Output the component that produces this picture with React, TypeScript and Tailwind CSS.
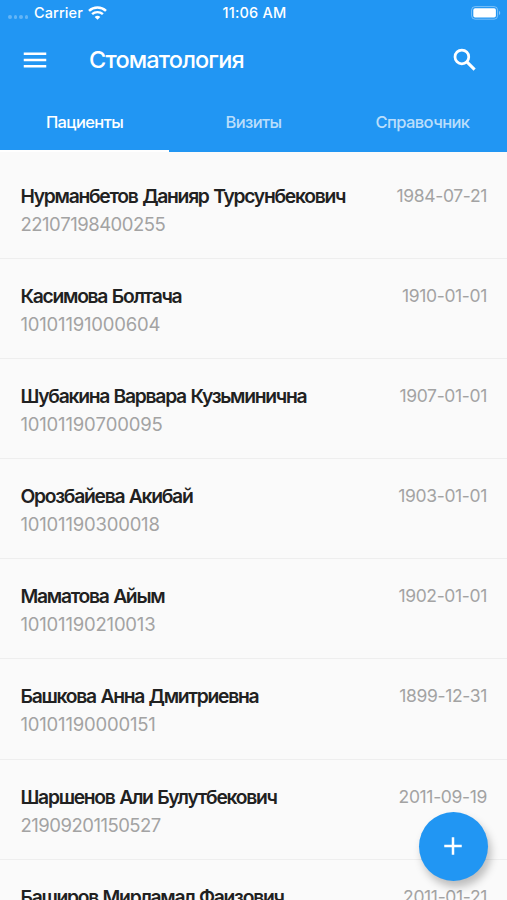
import { MdAdd, MdMenu } from 'react-icons/md'

interface Patient {
    name: string
    inn: string
    birthday: string
}

const tabs = ['Пациенты', 'Визиты', 'Справочник']

const patients: Patient[] = [
    { name: 'Нурманбетов Данияр Турсунбекович', inn: '22107198400255', birthday: '1984-07-21' },
    { name: 'Касимова Болтача', inn: '10101191000604', birthday: '1910-01-01' },
    { name: 'Шубакина Варвара Кузьминична', inn: '10101190700095', birthday: '1907-01-01' },
    { name: 'Орозбайева Акибай', inn: '10101190300018', birthday: '1903-01-01' },
    { name: 'Маматова Айым', inn: '10101190210013', birthday: '1902-01-01' },
    { name: 'Башкова Анна Дмитриевна', inn: '10101190000151', birthday: '1899-12-31' },
    { name: 'Шаршенов Али Булутбекович', inn: '21909201150527', birthday: '2011-09-19' },
    { name: 'Баширов Мирламал Фаизович', inn: '22101201100314', birthday: '2011-01-21' },
]

function StatusBar() {
    return (
        <div className="grid h-[26px] grid-cols-3 items-center pl-2 pr-[6px] text-[14.5px] font-medium leading-[26px]">
            <div className="flex items-center">
                <div className="mt-2 flex gap-[2px]">
                    {[0, 1, 2, 3].map((i) => (
                        <span key={i} className="h-[3.5px] w-[3.5px] rounded-full bg-white/30" />
                    ))}
                </div>
                <span className="ml-[6px] tracking-[0.1px]">Carrier</span>
                <svg className="ml-[5px]" width="19" height="14" viewBox="0 0 19 14" fill="none" stroke="white">
                    <path d="M1 4.9C5.8.4 13.2.4 18 4.9" strokeWidth="2.5" />
                    <path d="M4.1 8.2c3-2.8 7.8-2.8 10.8 0" strokeWidth="2.4" />
                    <path d="M9.5 13.7 6.7 10.9c1.6-1.4 4-1.4 5.6 0Z" fill="white" stroke="none" />
                </svg>
            </div>
            <span className="text-center tracking-[0.2px]">11:06 AM</span>
            <svg className="justify-self-end" width="30" height="14" viewBox="0 0 30 14" fill="none">
                <rect x=".6" y=".6" width="26" height="12.6" rx="3.5" stroke="white" strokeOpacity=".4" />
                <rect x="2.3" y="2.3" width="22.6" height="9.2" rx="1.8" fill="white" />
                <path d="M28 4.7c1.7.8 1.7 3.6 0 4.4Z" fill="white" fillOpacity=".45" />
            </svg>
        </div>
    )
}

function PatientRow({ patient }: { patient: Patient }) {
    // The digit 1 is narrow in Inter, so numbers that start with 1 are set looser
    const innTracking = patient.inn.startsWith('1') ? 'tracking-[-0.2px]' : 'tracking-[-0.5px]'

    return (
        <li className="flex h-[100.2px] shrink-0 items-start justify-between border-b border-[#eeeeee] pl-[20.5px] pr-5 pt-[23px]">
            <div>
                <p className="whitespace-nowrap text-[19.3px] font-semibold leading-7 tracking-[-1.28px] text-[#212121] [word-spacing:1px]">
                    {patient.name}
                </p>
                <p className={`text-[18.5px] leading-7 text-[#a3a3a3] [font-kerning:none] ${innTracking}`}>{patient.inn}</p>
            </div>
            <span className="text-[17.5px] leading-7 tracking-[-0.35px] text-[#a3a3a3]">{patient.birthday}</span>
        </li>
    )
}

export default function App() {
    return (
        <div className="relative flex h-[900px] w-[507px] flex-col overflow-hidden bg-[#fafafa] font-['Inter',sans-serif]">
            <header className="h-[152px] shrink-0 bg-[#2196f3] text-white">
                <StatusBar />

                {/* Toolbar */}
                <div className="flex h-[67px] items-center pl-5 pr-[27px]">
                    <MdMenu className="h-[30px] w-[30px]" />
                    <h1 className="ml-[39px] flex-1 text-[23.5px] font-medium tracking-[-0.85px]">Стоматология</h1>
                    <svg className="h-[30px] w-[30px]" viewBox="0 0 24 24" fill="none" stroke="currentColor" strokeWidth="2.2">
                        <circle cx="9.5" cy="9.5" r="5.5" />
                        <path d="m13.5 13.5 6.2 6.2" strokeWidth="2.4" />
                    </svg>
                </div>

                {/* Tabs */}
                <div className="grid h-[59px] grid-cols-3 text-[16.5px] font-medium tracking-[-0.6px]">
                    {tabs.map((tab, i) => (
                        <button
                            key={tab}
                            className={i === 0 ? 'border-b-2 border-white pt-[1px]' : 'pb-[1px] text-white/70'}
                        >
                            {tab}
                        </button>
                    ))}
                </div>
            </header>

            <ul className="flex flex-col pt-[6.5px]">
                {patients.map((patient) => (
                    <PatientRow key={patient.inn} patient={patient} />
                ))}
            </ul>

            <button className="absolute bottom-[19.5px] right-[19.5px] flex h-[69px] w-[69px] items-center justify-center rounded-full bg-[#2196f3] text-white shadow-[3px_6px_9px_rgba(0,0,0,0.25)]">
                <MdAdd className="h-[30px] w-[30px]" />
            </button>
        </div>
    )
}
